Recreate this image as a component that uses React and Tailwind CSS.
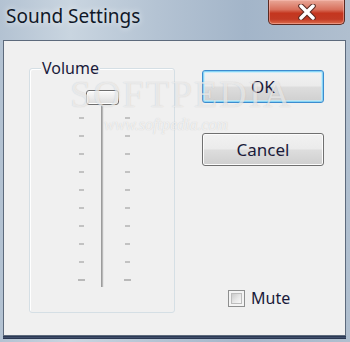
const ticks = [0, 1, 2, 3, 4, 5, 6, 7, 8, 9]

const TickColumn = () => (
  <div className="flex flex-col items-center gap-[16px] pt-[27px] w-[8px]">
    {ticks.map((t) => (
      <div
        key={t}
        className={t === 9 ? "h-[2px] w-[7px] bg-[#b9b9b9]" : "h-[2px] w-[5px] bg-[#c2c2c2]"}
      />
    ))}
  </div>
)

const App = () => {
  return (
    <div
      className="relative w-[350px] h-[342px] flex flex-col overflow-hidden bg-[linear-gradient(90deg,#b3c2d2_0%,#c9d5e0_20%,#b4c3d3_45%,#a3b5c9_70%,#b0bfcf_100%)]"
      style={{ fontFamily: '"Noto Sans", "Open Sans", sans-serif' }}
    >
      {/* title bar */}
      <div className="h-[40px] flex items-start justify-between">
        <span className="pl-[6px] pt-[3px] text-[19px] leading-[26px] text-[#101828] [text-shadow:0_0_6px_rgba(255,255,255,0.9)]">
          Sound Settings
        </span>
        <div className="mr-[5px] w-[77px] h-[25px] flex items-center justify-center rounded-b-[5px] border border-t-0 border-[#5b2a22] bg-[linear-gradient(180deg,#e9a898_0%,#d8705c_40%,#c4361f_55%,#c23a24_80%,#dd6e4e_100%)] shadow-[inset_0_0_0_1px_rgba(255,200,190,0.45)]">
          <svg width="20" height="16" viewBox="0 0 20 16">
            <path d="M4 2 L16 14 M16 2 L4 14" stroke="#5a2a22" strokeWidth="5.5" strokeLinecap="round" />
            <path d="M4 2 L16 14 M16 2 L4 14" stroke="#ffffff" strokeWidth="3.5" strokeLinecap="round" />
          </svg>
        </div>
      </div>

      {/* client area */}
      <div className="flex-1 ml-[3px] mr-[4px] mb-[6px] border border-[#5d6a7c] bg-[#f0f0f0] flex items-start shadow-[0_1px_0_#2c3a55,0_2px_0_#3f4e6b,0_3px_0_#2a3650]">
        {/* group box */}
        <div className="relative ml-[25px] mt-[27px] w-[146px] h-[245px] rounded-[3px] border border-[#d5dfe5] shadow-[inset_1px_1px_0_#ffffff]">
          <span className="absolute left-[11px] top-[-10px] px-[1px] bg-[#f0f0f0] text-[16px] leading-[18px] text-[#1a1a3a]">
            Volume
          </span>
          <div className="flex pl-[47px] pt-[21px]">
            <TickColumn />
            <div className="ml-[1px] w-[33px] flex flex-col items-center">
              <div className="w-[33px] h-[15px] rounded-[3px] border border-[#6f6f6f] bg-[linear-gradient(180deg,#fafafa_0%,#ececec_50%,#dadada_100%)] shadow-[inset_0_0_0_1px_#ffffff]" />
              <div className="w-[3px] h-[182px] bg-[#b8b8b8] border-l border-[#9c9c9c] border-r border-r-[#e6e6e6]" />
            </div>
            <div className="ml-[4px]">
              <TickColumn />
            </div>
          </div>
        </div>

        {/* right column */}
        <div className="ml-[27px] pt-[29px] w-[122px] flex flex-col">
          <button className="h-[33px] w-[122px] rounded-[3px] border border-[#3c8ccf] bg-[linear-gradient(180deg,#f2f2f2_0%,#ebebeb_48%,#dddddd_52%,#cfcfcf_100%)] shadow-[inset_0_0_0_1px_#86d4f5,inset_0_0_0_2px_rgba(190,235,252,0.7)] text-[17px] leading-[20px] text-[#1a1a3a]">
            OK
          </button>
          <button className="mt-[30px] h-[33px] w-[122px] rounded-[3px] border border-[#707070] bg-[linear-gradient(180deg,#f2f2f2_0%,#ebebeb_48%,#dddddd_52%,#cfcfcf_100%)] shadow-[inset_0_0_0_1px_#fcfcfc] text-[17px] leading-[20px] text-[#1a1a3a]">
            Cancel
          </button>
          <div className="mt-[122px] ml-[26px] flex items-center gap-[6px]">
            <div className="w-[17px] h-[17px] border border-[#8e8f8f] bg-[#f4f4f4] flex items-center justify-center">
              <div className="w-[11px] h-[11px] border border-[#bdbdbd] bg-[linear-gradient(135deg,#cbcbcb_0%,#e8e8e8_55%,#f8f8f8_100%)]" />
            </div>
            <span className="text-[16px] leading-[20px] text-[#1a1a3a]">Mute</span>
          </div>
        </div>
      </div>

      {/* watermark */}
      <div className="absolute left-[70px] top-[74px] pointer-events-none flex flex-col items-start">
        <span
          className="text-[38px] leading-[40px] tracking-[2px] text-white/60 [text-shadow:0_0_1px_rgba(120,120,120,0.35)]"
          style={{ fontFamily: '"Liberation Serif", serif' }}
        >
          SOFTPEDIA
        </span>
        <span
          className="ml-[34px] mt-[2px] text-[16px] leading-[18px] italic text-white/70 [text-shadow:0_0_1px_rgba(120,120,120,0.35)]"
          style={{ fontFamily: '"Liberation Serif", serif' }}
        >
          www.softpedia.com
        </span>
      </div>
    </div>
  )
}

export default App
